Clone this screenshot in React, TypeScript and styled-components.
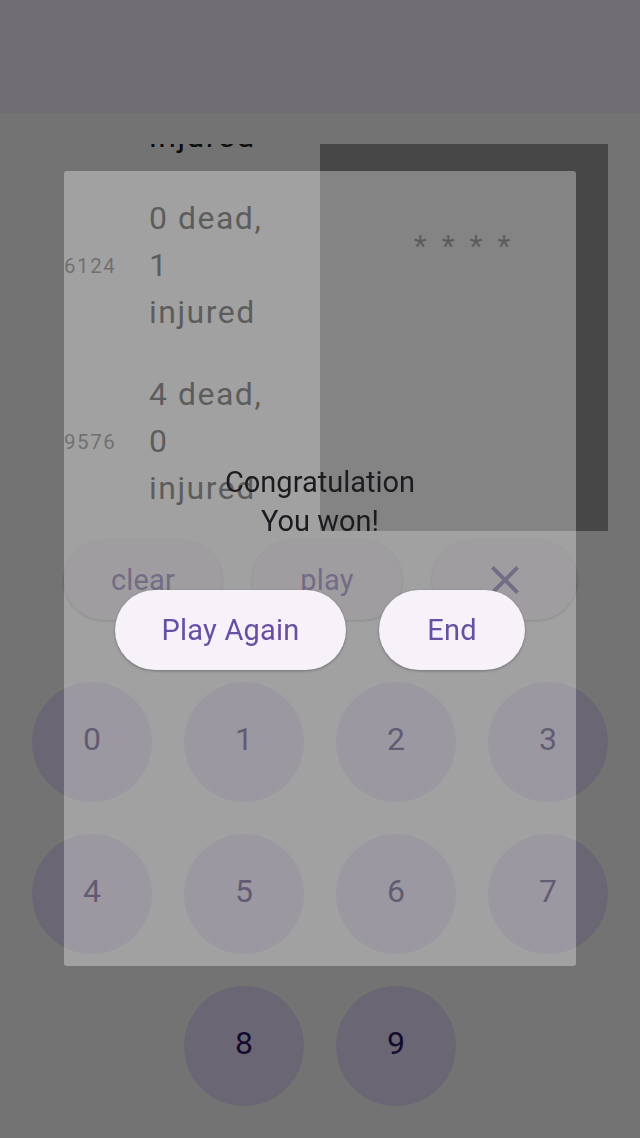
import React, { useLayoutEffect, useRef } from "react";
import styled, { createGlobalStyle } from "styled-components";
import { MdClose } from "react-icons/md";

const Global = createGlobalStyle`
  html, body { margin: 0; padding: 0; background: #ffffff; }
  body { font-family: Roboto, "Liberation Sans", Arial, sans-serif; }
  * { box-sizing: border-box; }
`;

const Page = styled.div`
  position: relative;
  min-height: 1138px;
  background: #ffffff;
  display: flex;
  flex-direction: column;
`;

const AppBar = styled.header`
  height: 113px;
  flex-shrink: 0;
  background: #f9f2ff;
`;

const Body = styled.main`
  padding: 31px 32px 32px;
  display: flex;
  flex-direction: column;
`;

const TopRow = styled.section`
  display: grid;
  grid-template-columns: 1fr 1fr;
  height: 387px;
`;

const ListPane = styled.div`
  overflow: hidden;
`;

const EntryList = styled.ul`
  list-style: none;
  margin: 0;
  padding: 0 0 35px 32px;
  display: flex;
  flex-direction: column;
  gap: 35px;
`;

const Entry = styled.li`
  display: flex;
  align-items: center;
`;

const Guess = styled.span`
  width: 85px;
  flex-shrink: 0;
  font-size: 20.5px;
  letter-spacing: 1.6px;
  color: #5f5f5f;
`;

const Result = styled.div`
  display: flex;
  flex-direction: column;
  font-size: 32px;
  line-height: 47px;
  letter-spacing: 1.5px;
  color: #1d1b20;
`;

const CodeBox = styled.div`
  background: #9e9e9e;
  padding-top: 84px;
  text-align: center;
  font-size: 30px;
  letter-spacing: 3.8px;
  color: #1d1b20;
`;

const ActionRow = styled.div`
  display: flex;
  gap: 30px;
  padding-left: 32px;
  margin-top: 9px;
`;

const Pill = styled.button<{ $width?: number }>`
  height: 80px;
  ${(p) => (p.$width ? `width: ${p.$width}px;` : "")}
  padding: 0 40px;
  border: none;
  border-radius: 40px;
  background: #f7f2fa;
  color: #6750a4;
  font-family: Roboto, "Liberation Sans", Arial, sans-serif;
  font-size: 29px;
  letter-spacing: 0.2px;
  display: inline-flex;
  align-items: center;
  justify-content: center;
  flex-shrink: 0;
  white-space: nowrap;
  box-shadow: 0 1px 3px rgba(0, 0, 0, 0.3);
  cursor: pointer;
`;

const Keypad = styled.div`
  margin-top: 62px;
  display: flex;
  flex-wrap: wrap;
  justify-content: center;
  gap: 32px;
`;

const Key = styled.button`
  width: 120px;
  height: 120px;
  border: none;
  border-radius: 50%;
  background: #ede2ff;
  color: #2e1a66;
  font-family: Roboto, "Liberation Sans", Arial, sans-serif;
  font-size: 32px;
  display: flex;
  align-items: center;
  justify-content: center;
  padding: 0 0 6px;
`;

const Barrier = styled.div`
  position: fixed;
  inset: 0;
  background: rgba(0, 0, 0, 0.55);
`;

const Dialog = styled.div`
  position: fixed;
  left: 64px;
  top: 171px;
  width: 512px;
  height: 795px;
  padding-bottom: 5px;
  background: rgba(255, 255, 255, 0.33);
  border-radius: 3px;
  display: flex;
  flex-direction: column;
  align-items: center;
  justify-content: center;
`;

const Message = styled.p`
  margin: 0;
  font-size: 29px;
  line-height: 39px;
  text-align: center;
  color: #1d1b20;
`;

const DialogActions = styled.div`
  margin-top: 49px;
  display: flex;
  gap: 33px;
`;

const entries = [
  { guess: "1583", lines: ["1 dead,", "2", "injured"] },
  { guess: "6124", lines: ["0 dead,", "1", "injured"] },
  { guess: "9576", lines: ["4 dead,", "0", "injured"] },
];

export default function App() {
  const listRef = useRef<HTMLDivElement>(null);
  useLayoutEffect(() => {
    if (listRef.current) listRef.current.scrollTop = 125;
  }, []);

  return (
    <Page>
      <Global />
      <AppBar />
      <Body>
        <TopRow>
          <ListPane ref={listRef}>
            <EntryList>
              {entries.map((e) => (
                <Entry key={e.guess}>
                  <Guess>{e.guess}</Guess>
                  <Result>
                    {e.lines.map((l) => (
                      <span key={l}>{l}</span>
                    ))}
                  </Result>
                </Entry>
              ))}
            </EntryList>
          </ListPane>
          <CodeBox>* * * *</CodeBox>
        </TopRow>
        <ActionRow>
          <Pill $width={158}>clear</Pill>
          <Pill $width={150}>play</Pill>
          <Pill $width={145} aria-label="close">
            <MdClose size={48} />
          </Pill>
        </ActionRow>
        <Keypad>
          {[0, 1, 2, 3, 4, 5, 6, 7, 8, 9].map((n) => (
            <Key key={n}>{n}</Key>
          ))}
        </Keypad>
      </Body>
      <Barrier />
      <Dialog role="dialog">
        <Message>
          Congratulation
          <br />
          You won!
        </Message>
        <DialogActions>
          <Pill $width={231}>Play Again</Pill>
          <Pill $width={146}>End</Pill>
        </DialogActions>
      </Dialog>
    </Page>
  );
}
